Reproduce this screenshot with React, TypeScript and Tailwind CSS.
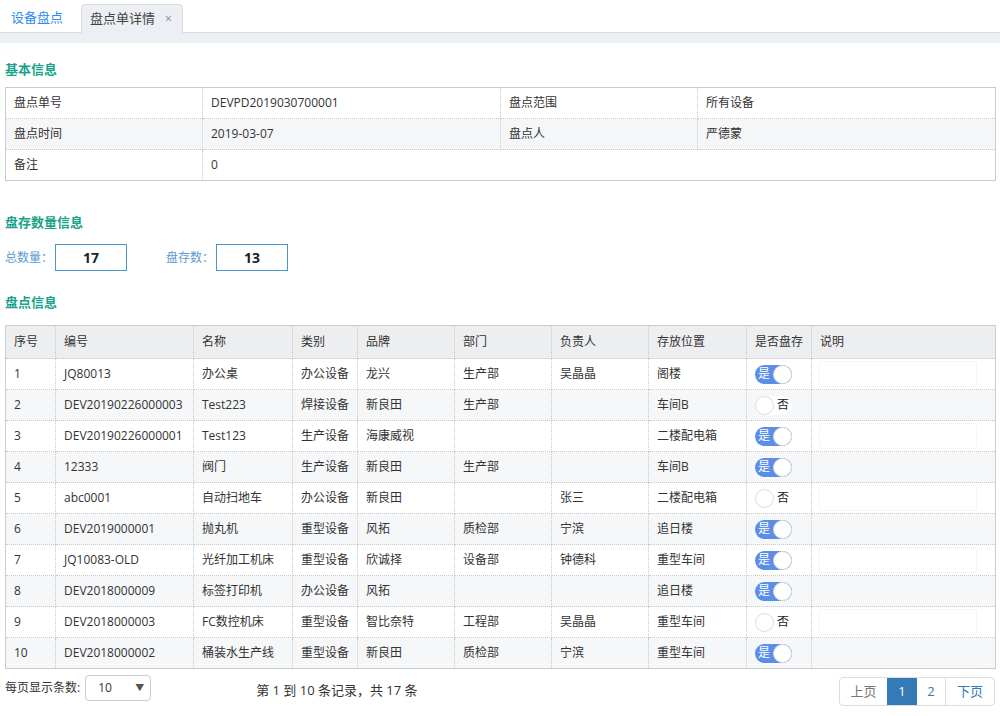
import React from "react";

type Row = [string, string, string, string, string, string, string, string, boolean];

const rows: Row[] = [
  ["1", "JQ80013", "办公桌", "办公设备", "龙兴", "生产部", "吴晶晶", "阁楼", true],
  ["2", "DEV20190226000003", "Test223", "焊接设备", "新良田", "生产部", "", "车间B", false],
  ["3", "DEV20190226000001", "Test123", "生产设备", "海康威视", "", "", "二楼配电箱", true],
  ["4", "12333", "阀门", "生产设备", "新良田", "生产部", "", "车间B", true],
  ["5", "abc0001", "自动扫地车", "办公设备", "新良田", "", "张三", "二楼配电箱", false],
  ["6", "DEV2019000001", "抛丸机", "重型设备", "风拓", "质检部", "宁滨", "追日楼", true],
  ["7", "JQ10083-OLD", "光纤加工机床", "重型设备", "欣诚择", "设备部", "钟德科", "重型车间", true],
  ["8", "DEV2018000009", "标签打印机", "办公设备", "风拓", "", "", "追日楼", true],
  ["9", "DEV2018000003", "FC数控机床", "重型设备", "智比奈特", "工程部", "吴晶晶", "重型车间", false],
  ["10", "DEV2018000002", "桶装水生产线", "重型设备", "新良田", "质检部", "宁滨", "重型车间", true],
];

const headers = ["序号", "编号", "名称", "类别", "品牌", "部门", "负责人", "存放位置", "是否盘存", "说明"];
const widths = [50, 138, 99, 65, 97, 97, 97, 98, 65, 184];

function Toggle({ on }: { on: boolean }) {
  if (on) {
    return (
      <div className="relative flex h-[19px] w-[37px] items-center rounded-full bg-[#5b8ee6]">
        <span className="pl-[3px] text-[12px] leading-none text-white">是</span>
        <span className="absolute right-0 top-0 h-[19px] w-[19px] rounded-full border border-[#dddddd] bg-white" />
      </div>
    );
  }
  return (
    <div className="relative flex h-[19px] w-[37px] items-center justify-end rounded-full bg-white">
      <span className="pr-[3px] text-[12px] leading-none text-[#222]">否</span>
      <span className="absolute left-0 top-0 h-[19px] w-[19px] rounded-full border border-[#dddddd] bg-white" />
    </div>
  );
}

function Title({ children, className }: { children: React.ReactNode; className?: string }) {
  return (
    <div className={"text-[13px] font-bold leading-[16px] text-[#1aa38a] " + (className ?? "")}>{children}</div>
  );
}

export default function App() {
  return (
    <div
      className="min-h-[716px] w-[1000px] bg-white text-[12px] text-[#333]"
      style={{ fontFamily: '"Open Sans", "Noto Sans CJK SC", sans-serif' }}
    >
      {/* Tabs */}
      <div className="flex h-[33px] items-end border-b border-[#dcdcdc]">
        <div className="flex h-[28px] w-[81px] items-center pl-[11px] text-[13px] text-[#2d8cf0]">设备盘点</div>
        <div className="-mb-px flex h-[29px] w-[102px] items-center rounded-t-[4px] border border-b-0 border-[#dcdcdc] bg-[#eceff3] pl-[8px] text-[13px] text-[#444]">
          <span>盘点单详情</span>
          <span className="ml-[10px] text-[12px] text-[#888]">×</span>
        </div>
      </div>
      <div className="h-[10px] bg-[#eceff3]" />

      <div className="px-[5px]">
        <Title className="pt-[18px]">基本信息</Title>
        <table className="mt-[10px] w-[990px] table-fixed border-collapse border border-solid border-[#cccccc]">
          <colgroup>
            <col style={{ width: 197 }} />
            <col style={{ width: 298 }} />
            <col style={{ width: 197 }} />
            <col style={{ width: 298 }} />
          </colgroup>
          <tbody>
            <tr className="h-[31px]">
              <td className="border border-dotted border-[#c8c8c8] pl-[8px]">盘点单号</td>
              <td className="border border-dotted border-[#c8c8c8] pl-[8px]">DEVPD2019030700001</td>
              <td className="border border-dotted border-[#c8c8c8] pl-[8px]">盘点范围</td>
              <td className="border border-dotted border-[#c8c8c8] pl-[8px]">所有设备</td>
            </tr>
            <tr className="h-[31px] bg-[#f5f6f8]">
              <td className="border border-dotted border-[#c8c8c8] pl-[8px]">盘点时间</td>
              <td className="border border-dotted border-[#c8c8c8] pl-[8px]">2019-03-07</td>
              <td className="border border-dotted border-[#c8c8c8] pl-[8px]">盘点人</td>
              <td className="border border-dotted border-[#c8c8c8] pl-[8px]">严德蒙</td>
            </tr>
            <tr className="h-[31px]">
              <td className="border border-dotted border-[#c8c8c8] pl-[8px]">备注</td>
              <td colSpan={3} className="border border-dotted border-[#c8c8c8] pl-[8px]">0</td>
            </tr>
          </tbody>
        </table>

        <Title className="mt-[33px]">盘存数量信息</Title>
        <div className="mt-[14px] flex items-center">
          <span className="text-[12px] text-[#5b9bd1]">总数量：</span>
          <div className="ml-[2px] flex h-[27px] w-[72px] items-center justify-center border border-[#4b97cc] text-[14px] font-bold text-[#222]">
            17
          </div>
          <span className="ml-[39px] text-[12px] text-[#5b9bd1]">盘存数：</span>
          <div className="ml-[2px] flex h-[27px] w-[72px] items-center justify-center border border-[#4b97cc] text-[14px] font-bold text-[#222]">
            13
          </div>
        </div>

        <Title className="mt-[23px]">盘点信息</Title>
        <table className="mt-[15px] w-[990px] table-fixed border-collapse border border-solid border-[#cccccc]">
          <colgroup>
            {widths.map((w, i) => (
              <col key={i} style={{ width: w }} />
            ))}
          </colgroup>
          <thead>
            <tr className="h-[33px] bg-[#edeef0]">
              {headers.map((h) => (
                <th key={h} className="border border-dotted border-[#c8c8c8] pl-[8px] text-left font-normal">
                  {h}
                </th>
              ))}
            </tr>
          </thead>
          <tbody>
            {rows.map((r, i) => (
              <tr key={r[0]} className={"h-[31px] " + (i % 2 === 1 ? "bg-[#f6f7f9]" : "bg-white")}>
                {r.slice(0, 8).map((c, j) => (
                  <td key={j} className="whitespace-nowrap border border-dotted border-[#c8c8c8] pl-[8px]">
                    {c as string}
                  </td>
                ))}
                <td className="border border-dotted border-[#c8c8c8] pl-[8px]">
                  <Toggle on={r[8]} />
                </td>
                <td className="border border-dotted border-[#c8c8c8] px-[7px] py-[2px]">
                  <div className="h-[26px] w-[158px] rounded-[3px] border border-[#f4f5f7]" />
                </td>
              </tr>
            ))}
          </tbody>
        </table>

        <div className="mt-[6px] flex items-start">
          <div className="flex h-[26px] items-center">
            <span className="text-[12px] text-[#333]">每页显示条数:</span>
            <div className="ml-[5px] flex h-[26px] w-[66px] items-center justify-between rounded-[4px] border border-[#cccccc] pl-[12px] pr-[6px]">
              <span className="text-[12px] text-[#333]">10</span>
              <span className="text-[9px] text-[#555]">▼</span>
            </div>
          </div>
          <div className="ml-[105px] flex h-[31px] items-center text-[13px] text-[#333]">第 1 到 10 条记录，共 17 条</div>
          <div className="ml-auto mt-[2px] flex h-[29px] overflow-hidden rounded-[4px] border border-[#dddddd] text-[13px]">
            <div className="flex w-[47px] items-center justify-center text-[#777]">上页</div>
            <div className="flex w-[30px] items-center justify-center bg-[#337ab7] text-white">1</div>
            <div className="flex w-[29px] items-center justify-center border-r border-[#dddddd] text-[#337ab7]">2</div>
            <div className="flex w-[48px] items-center justify-center text-[#337ab7]">下页</div>
          </div>
        </div>
      </div>
    </div>
  );
}
